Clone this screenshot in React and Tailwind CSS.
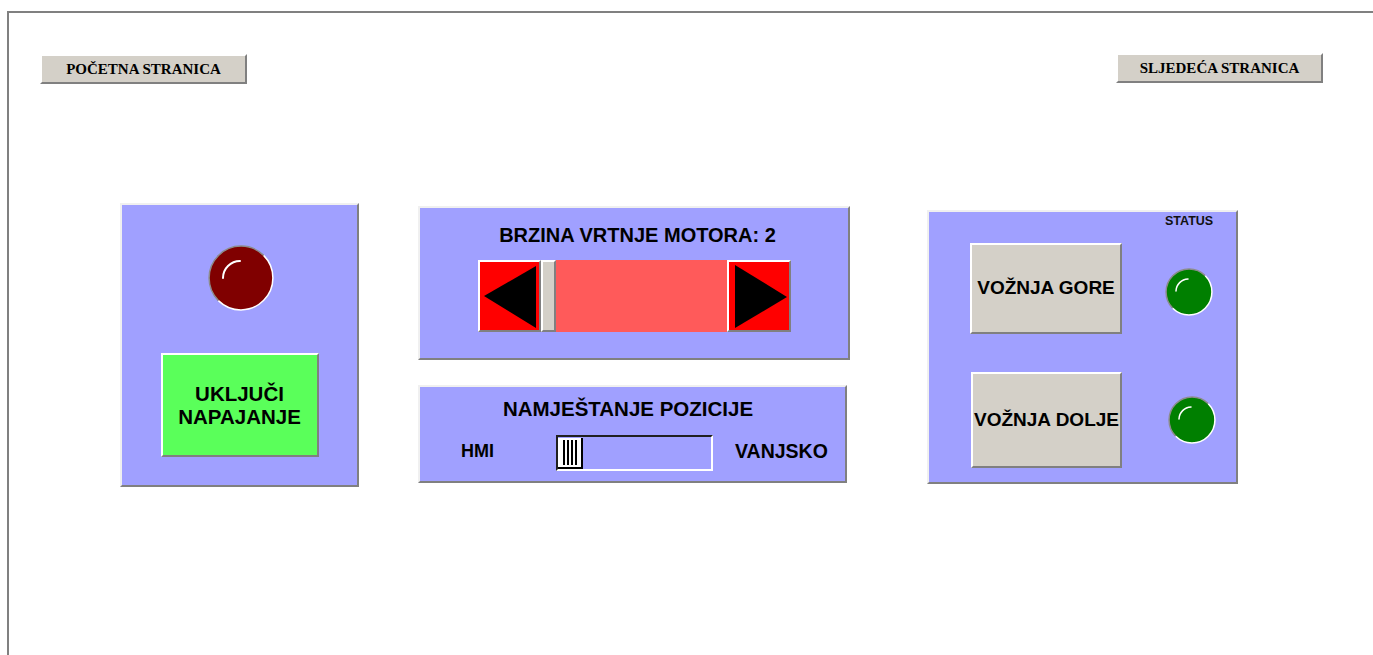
import React from "react";

const raised = "border-2 border-t-white border-l-white border-b-[#808080] border-r-[#808080]";
const panel = "bg-[#a0a0ff] border-2 border-t-[#f0f0f0] border-l-[#f0f0f0] border-b-[#808080] border-r-[#808080]";
const sans = { fontFamily: '"Liberation Sans", Arial, sans-serif' };
const serif = { fontFamily: '"Liberation Serif", "Times New Roman", serif' };

function Led({ size, color, arc, sw }) {
  const c = size / 2;
  const R = c - 1;
  return (
    <svg width={size} height={size} viewBox={`0 0 ${size} ${size}`} className="block">
      <circle cx={c} cy={c} r={R} fill={color} />
      <path
        d={`M ${c - R * 0.7071} ${c + R * 0.7071} A ${R} ${R} 0 0 1 ${c + R * 0.7071} ${c - R * 0.7071}`}
        fill="none"
        stroke="#8c8c8c"
        strokeWidth="1.5"
      />
      <path
        d={`M ${c + R * 0.7071} ${c - R * 0.7071} A ${R} ${R} 0 0 1 ${c - R * 0.7071} ${c + R * 0.7071}`}
        fill="none"
        stroke="#ffffff"
        strokeWidth="1.5"
      />
      <path d={arc} fill="none" stroke="#ffffff" strokeWidth={sw} strokeLinecap="round" />
    </svg>
  );
}

export default function App() {
  return (
    <div className="w-[1373px] h-[655px] bg-white overflow-hidden" style={sans}>
      <div className="ml-[7px] mt-[11px] h-[644px] border-l-2 border-t-2 border-[#808080]">
        {/* header */}
        <div className="flex items-start justify-between pt-[40px] pl-[31px] pr-[50px]">
          <div
            className={`mt-[1px] w-[207px] h-[30px] bg-[#d4d0c8] ${raised} flex items-center justify-center text-[15px] font-bold text-black`}
            style={serif}
          >
            POČETNA STRANICA
          </div>
          <div
            className={`w-[207px] h-[30px] bg-[#d4d0c8] ${raised} flex items-center justify-center text-[15px] font-bold text-black`}
            style={serif}
          >
            SLJEDEĆA STRANICA
          </div>
        </div>

        {/* panels */}
        <div className="flex items-start mt-[119px] pl-[111px]">
          {/* left panel */}
          <div className={`w-[239px] h-[284px] ${panel} flex flex-col items-center`}>
            <div className="mt-[40px] ml-[2px]">
              <Led size={66} color="#800000" arc="M 15 33 A 17 17 0 0 1 32 16" sw={2} />
            </div>
            <div
              className={`mt-[42px] w-[158px] h-[104px] bg-[#5aff5a] ${raised} flex flex-col items-center justify-center text-[20.5px] leading-[23px] font-bold text-black text-center`}
            >
              <span>UKLJUČI</span>
              <span>NAPAJANJE</span>
            </div>
          </div>

          {/* middle column */}
          <div className="ml-[59px] mt-[3px] flex flex-col">
            <div className={`w-[432px] h-[154px] ${panel} flex flex-col items-center`}>
              <div className="pt-[16px] pl-[7px] text-[20px] leading-[23px] font-bold text-black">
                BRZINA VRTNJE MOTORA: 2
              </div>
              <div className="mt-[13px] flex h-[72px]">
                <div className={`w-[63px] h-[72px] bg-[#ff0000] ${raised}`}>
                  <svg width="59" height="68" viewBox="0 0 59 68" className="block">
                    <polygon points="4,34 56,4 56,66" fill="#000" />
                  </svg>
                </div>
                <div className="w-[15px] h-[72px] bg-[#d4d0c8] border-2 border-t-white border-l-white border-b-[#808080] border-r-[#808080]" />
                <div className="w-[171px] h-[72px] bg-[#ff5a5a]" />
                <div className={`w-[64px] h-[72px] bg-[#ff0000] ${raised}`}>
                  <svg width="60" height="68" viewBox="0 0 60 68" className="block">
                    <polygon points="6,3 6,66 58,35" fill="#000" />
                  </svg>
                </div>
              </div>
            </div>

            <div className={`mt-[25px] w-[429px] h-[98px] ${panel} flex flex-col`}>
              <div className="pt-[10px] pr-[9px] text-center text-[20.5px] leading-[23px] font-bold text-black">
                NAMJEŠTANJE POZICIJE
              </div>
              <div className="mt-[15px] flex items-center h-[36px]">
                <div className="w-[136px] pl-[41px] pb-[3px] text-[18px] font-bold text-black">HMI</div>
                <div className="w-[157px] h-[36px] border-2 border-t-[#202020] border-l-[#202020] border-b-white border-r-white flex items-center">
                  <div className="w-[25px] h-[31px] bg-white border-r-2 border-b-2 border-black flex items-stretch gap-[2px] pl-[5px] py-[2px]">
                    <div className="w-[2px] bg-black" />
                    <div className="w-[2px] bg-black" />
                    <div className="w-[2px] bg-black" />
                    <div className="w-[2px] bg-black" />
                  </div>
                </div>
                <div className="w-[132px] pl-[22px] pb-[3px] text-[19.5px] font-bold text-black">VANJSKO</div>
              </div>
            </div>
          </div>

          {/* right panel */}
          <div className={`ml-[77px] mt-[7px] w-[311px] h-[274px] ${panel} flex flex-col pl-[41px]`}>
            <div className="flex pt-[2px]">
              <div className="ml-[195px] w-[48px] text-center text-[12.5px] leading-[14px] font-bold text-[#111]">
                STATUS
              </div>
            </div>
            <div className="mt-[15px] flex items-center">
              <div
                className={`w-[152px] h-[91px] bg-[#d4d0c8] ${raised} flex items-center justify-center text-[19px] font-bold text-black`}
              >
                VOŽNJA GORE
              </div>
              <div className="ml-[43px] mt-[7px]">
                <Led size={48} color="#007f00" arc="M 11 23 A 12.5 12.5 0 0 1 23 11" sw={1.5} />
              </div>
            </div>
            <div className="mt-[38px] flex items-center">
              <div
                className={`ml-[1px] w-[151px] h-[96px] bg-[#d4d0c8] ${raised} flex items-center justify-center text-[19px] font-bold text-black`}
              >
                VOŽNJA DOLJE
              </div>
              <div className="ml-[46px]">
                <Led size={48} color="#007f00" arc="M 11 23 A 12.5 12.5 0 0 1 23 11" sw={1.5} />
              </div>
            </div>
          </div>
        </div>
      </div>
    </div>
  );
}
